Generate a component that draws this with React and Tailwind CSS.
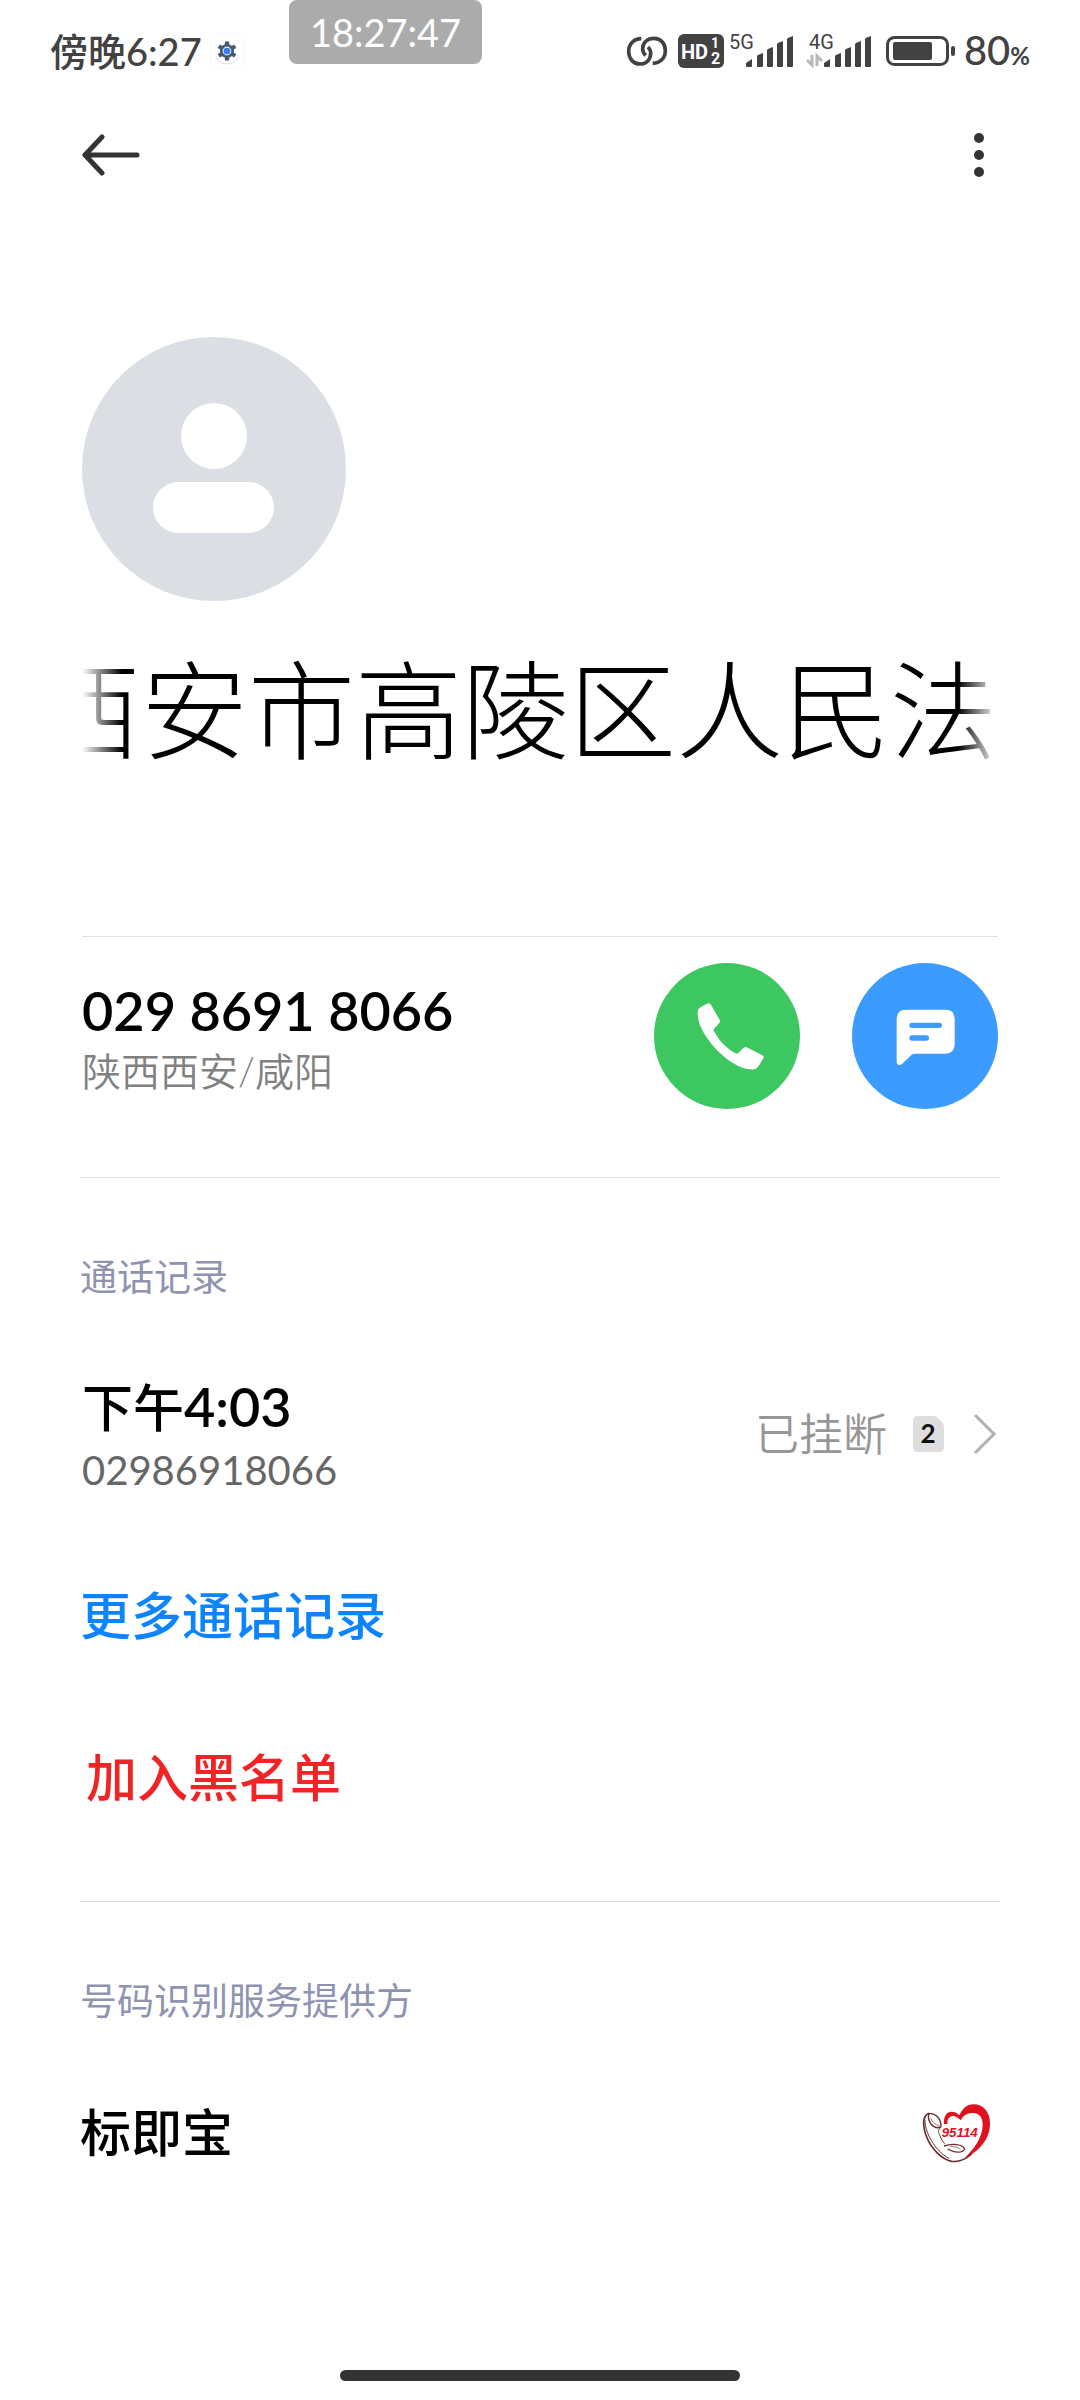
const SignalBars = ({ label, activity }) => (
    <svg className="overflow-visible" width="66" height="36" viewBox="0 0 66 36" fill="#424242" role="img" aria-label={`${label} 信号`}>
        <text x={activity ? 3 : 1} y="16" className="font-[Roboto] text-[20px]">{label}</text>
        {activity && (
            <path d="M6 22V32L1 27M11 33V23L16 28" fill="none" stroke="#b8b8b8" strokeWidth="3" />
        )}
        <g transform="translate(17 0)">
            <path d="M1 30l6-4v7q0 1-1 1H2q-1 0-1-1z" />
            <path d="M12 23q0-1 6-3v13q0 1-1 1h-4q-1 0-1-1z" />
            <path d="M22 17q0-1 6-3v19q0 1-1 1h-4q-1 0-1-1z" />
            <path d="M32 11q0-1 6-3v25q0 1-1 1h-4q-1 0-1-1z" />
            <path d="M42 6q0-1 6-3v30q0 1-1 1h-4q-1 0-1-1z" />
        </g>
    </svg>
);

const StatusBar = () => (
    <header className="relative flex h-[102px] items-center justify-between pr-[50px] pl-[50px] text-[#424242]">
        <div className="flex items-center gap-2">
            <span className="text-[38px] leading-10 font-medium">傍晚6:27</span>
            <svg width="34" height="36" viewBox="0 0 96 102" aria-hidden="true">
                <rect x="1" y="1" width="94" height="100" rx="14" fill="#fff" stroke="#f7f5f5" strokeWidth="2" />
                <path d="M16 68a36 36 0 0 0 64 0" fill="none" stroke="#e4dcf2" strokeWidth="3" />
                <g fill="#455a70">
                    <rect x="42" y="24" width="12" height="54" />
                    <rect x="42" y="24" width="12" height="54" transform="rotate(60 48 51)" />
                    <rect x="42" y="24" width="12" height="54" transform="rotate(120 48 51)" />
                    <circle cx="48" cy="51" r="20" />
                </g>
                <circle cx="48" cy="51" r="11" fill="#3b7ded" stroke="#dcebff" strokeWidth="3" />
            </svg>
        </div>
        <time className="absolute top-0 left-[289px] flex h-16 w-[193px] items-center justify-center rounded-lg bg-[#ababab] text-[38px] text-white">
            18:27:47
        </time>
        <div className="flex items-center">
            <svg width="42" height="30" viewBox="0 0 126 90" fill="none" stroke="#424242" strokeWidth="11" aria-hidden="true">
                <path d="M46 8C24 8 8 24 8 46s14 38 34 38c20 0 32-14 32-32 0-10-3-14-8-19" />
                <path d="M80 82c22 0 38-16 38-38S104 7 84 7C64 7 50 20 50 38c0 10 4 15 9 20" />
            </svg>
            <svg className="ml-2.5" width="46" height="34" viewBox="0 0 46 34" role="img" aria-label="HD">
                <rect width="46" height="34" rx="6" fill="#424242" />
                <g fill="#fff" className="font-[Roboto] font-bold">
                    <text x="3" y="25" className="text-[20px]">HD</text>
                    <text x="33" y="14" className="text-[14px]">1</text>
                    <text x="33" y="30" className="text-[16px]">2</text>
                </g>
            </svg>
            <div className="ml-1 flex gap-3">
                <SignalBars label="5G" />
                <SignalBars label="4G" activity />
            </div>
            <svg className="ml-3.5" width="70" height="30" viewBox="0 0 70 30" aria-hidden="true">
                <rect x="1.5" y="1.5" width="60" height="27" rx="7" fill="none" stroke="#424242" strokeWidth="3" />
                <rect x="7" y="6" width="39" height="18" rx="2" fill="#424242" />
                <rect x="65" y="10" width="4" height="10" rx="2" fill="#424242" />
            </svg>
            <span className="ml-2 text-[40px] leading-10 font-medium">80<span className="text-2xl font-bold">%</span></span>
        </div>
    </header>
);

const Avatar = () => (
    <svg width="264" height="264" viewBox="0 0 264 264" role="img" aria-label="头像">
        <circle cx="132" cy="132" r="132" fill="#dbdee3" />
        <circle cx="132" cy="99" r="33" fill="#fff" />
        <rect x="71" y="145" width="121" height="51" rx="25.5" fill="#fff" />
    </svg>
);

const PhoneIcon = () => (
    <svg width="73" height="73" viewBox="211 238 219 219" fill="#fff" aria-hidden="true">
        <path d="M232 290C229 270 232 265 240 260L259 249Q267 246 271 252L297 298Q300 303 296 307L279 326Q278 329 280 332C297 362 316 382 344 398Q349 401 353 397L369 381Q373 378 378 380L425 404Q431 407 428 413L416 433C409 444 402 448 387 446C329 443 240 352 232 290Z" />
    </svg>
);

const MessageIcon = () => (
    <svg width="73" height="73" viewBox="805 238 219 219" aria-hidden="true">
        <path d="M828 295Q828 267 856 267H974Q1002 267 1002 295V371Q1002 399 974 399H884Q877 399 872 403L844 430Q836 436 830 430Q828 428 828 422Z" fill="#fff" />
        <path d="M874 314H956M874 352H917" stroke="#3c9bff" strokeWidth="16" strokeLinecap="round" />
    </svg>
);

const ProviderLogo = () => (
    <svg width="72" height="64" viewBox="120 95 216 190" role="img" aria-label="95114">
        <path d="M192 163C190 137 202 126 214 126C225 126 233 131 238 137C249 113 264 104 281 104C308 104 330 124 330 162C330 208 297 246 253 266C282 238 306 205 308 168C309 145 299 131 281 130C262 129 250 137 242 152C230 139 219 136 211 141C204 145 202 152 202 163Z" fill="#e0121d" />
        <g fill="none" stroke="#6b2b31">
            <path d="M147 131C126 138 128 172 140 202C153 236 184 268 215 275C236 278 258 268 275 253" strokeWidth="5" />
            <path d="M135 150C133 185 165 245 207 266" strokeWidth="3" />
            <path d="M147 132C167 129 184 149 183 171C169 181 150 166 146 148Q144 138 147 132Z" strokeWidth="4" />
            <path d="M152 146Q160 164 178 169" strokeWidth="2" />
            <path d="M183 173C171 181 176 190 180 198Q184 212 194 222" strokeWidth="3" />
            <path d="M192 229C218 220 248 224 254 238C246 253 220 248 203 238" strokeWidth="4" />
            <path d="M211 230Q232 230 242 239" strokeWidth="2" />
        </g>
        <text x="185" y="202" fill="#e0121d" className="font-['Liberation_Sans'] text-[40px] font-bold italic">95114</text>
    </svg>
);

const Section = ({ title, children }) => (
    <section className="border-t border-[#dedede] pt-[69px]">
        <h2 className="text-[37px] leading-[60px] text-[#8e93b0]">{title}</h2>
        {children}
    </section>
);

const App = () => {
    return (
        <div className="flex min-h-screen flex-col bg-white font-[Lato,'Noto_Sans_CJK_SC',sans-serif] text-black">
            <StatusBar />
            <nav className="flex h-[106px] items-center justify-between px-20">
                <button type="button" aria-label="返回">
                    <svg width="62" height="42" viewBox="0 0 62 42" fill="none" stroke="#333" strokeWidth="5" strokeLinecap="round" strokeLinejoin="round">
                        <path d="M57 21H5M22 3L5 21L22 39" />
                    </svg>
                </button>
                <button type="button" aria-label="更多">
                    <svg width="42" height="46" viewBox="0 0 42 46" fill="#333">
                        <circle cx="21" cy="6" r="5" />
                        <circle cx="21" cy="23" r="5" />
                        <circle cx="21" cy="40" r="5" />
                    </svg>
                </button>
            </nav>

            <main className="px-20 pt-[129px]">
                <div className="px-0.5">
                    <Avatar />
                    <div className="mt-[39px] overflow-hidden [mask-image:linear-gradient(to_right,transparent,black_40px,black_calc(100%-40px),transparent)]">
                        <h1 className="-ml-12 text-[107px] leading-[140px] font-light whitespace-nowrap">西安市高陵区人民法</h1>
                    </div>
                    <div className="mt-[156px] flex items-start justify-between border-t border-[#dedede] pt-[26px] pb-[68px]">
                        <div className="pt-[18px]">
                            <p className="text-[54px] leading-[60px] font-semibold">029 8691 8066</p>
                            <p className="text-[39px] leading-[60px] font-[350] text-[#808080]">陕西西安/咸阳</p>
                        </div>
                        <div className="flex gap-[52px]">
                            <button type="button" aria-label="拨打电话" className="flex size-[146px] items-center justify-center rounded-full bg-[#3cc761]">
                                <PhoneIcon />
                            </button>
                            <button type="button" aria-label="发送短信" className="flex size-[146px] items-center justify-center rounded-full bg-[#3c9bff]">
                                <MessageIcon />
                            </button>
                        </div>
                    </div>
                </div>

                <Section title="通话记录">
                    <button type="button" className="mt-[69px] flex w-full items-center justify-between pr-[3px] pl-0.5 text-left">
                        <span className="block">
                            <span className="block text-[51px] leading-[62px] font-medium">下午<span className="text-[54px] font-semibold">4:03</span></span>
                            <span className="block text-[40px] leading-[62px] text-[#666]">02986918066</span>
                        </span>
                        <span className="flex items-center pb-2.5">
                            <span className="text-[44px] leading-[62px] font-[350] text-[#969696]">已挂断</span>
                            <svg className="ml-[26px]" width="31" height="36" viewBox="0 0 31 36" role="img" aria-label="卡2">
                                <path d="M5 0H20Q23 0 25 2L29 6Q31 8 31 11V31Q31 36 26 36H5Q0 36 0 31V5Q0 0 5 0Z" fill="#dedede" />
                                <text x="15" y="27" textAnchor="middle" fill="#111" className="text-[26px] font-bold">2</text>
                            </svg>
                            <svg className="ml-[29px]" width="24" height="42" viewBox="0 0 24 42" fill="none" stroke="#b0b0b0" strokeWidth="3" aria-hidden="true">
                                <path d="M2 2L21 21L2 40" />
                            </svg>
                        </span>
                    </button>
                    <button type="button" className="mt-[75px] block text-[51px] leading-[80px] font-medium text-[#0d84ff]">更多通话记录</button>
                    <button type="button" className="mt-[82px] mb-[83px] ml-1.5 block text-[51px] leading-[80px] font-medium text-[#f02424]">加入黑名单</button>
                </Section>

                <Section title="号码识别服务提供方">
                    <div className="mt-[70px] flex items-center justify-between pr-2">
                        <span className="text-[51px] leading-[64px] font-medium">标即宝</span>
                        <ProviderLogo />
                    </div>
                </Section>
            </main>

            <footer className="mt-auto flex justify-center pb-[19px]">
                <div className="h-[11px] w-[37%] rounded-full bg-[#333]" />
            </footer>
        </div>
    );
};

export default App;
